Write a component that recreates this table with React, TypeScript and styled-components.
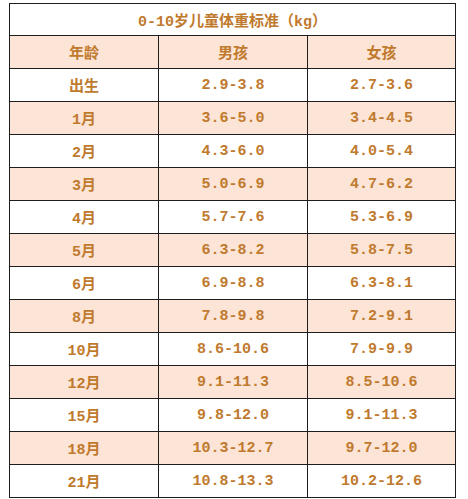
import React from "react";
import styled, { createGlobalStyle } from "styled-components";

const Global = createGlobalStyle`
  html, body { margin: 0; padding: 0; background: #ffffff; }
  body { font-family: "Liberation Mono", "Noto Sans CJK SC", monospace; }
`;

const Page = styled.div`
  padding: 3px 0 0 9px;
`;

const Table = styled.div`
  display: grid;
  grid-template-columns: 149px 149px 148px;
  width: 447px;
  border-left: 1px solid #1e1e1e;
  border-top: 1px solid #1e1e1e;
  box-sizing: border-box;
`;

const Cell = styled.div<{ $shade?: boolean; $span?: number; $h?: number }>`
  box-sizing: border-box;
  height: ${(p) => p.$h ?? 33}px;
  grid-column: span ${(p) => p.$span ?? 1};
  border-right: 1px solid #1e1e1e;
  border-bottom: 1px solid #1e1e1e;
  background: ${(p) => (p.$shade ? "#fce4d6" : "#ffffff")};
  display: flex;
  align-items: center;
  justify-content: center;
  color: #c07a2e;
  font-family: "Liberation Mono", "Noto Sans CJK SC", monospace;
  font-weight: 700;
  font-size: 15px;
  white-space: pre;
`;

const rows: [string, string, string][] = [
  ["出生", "2.9-3.8", "2.7-3.6"],
  ["1月", "3.6-5.0", "3.4-4.5"],
  ["2月", "4.3-6.0", "4.0-5.4"],
  ["3月", "5.0-6.9", "4.7-6.2"],
  ["4月", "5.7-7.6", "5.3-6.9"],
  ["5月", "6.3-8.2", "5.8-7.5"],
  ["6月", "6.9-8.8", "6.3-8.1"],
  ["8月", "7.8-9.8", "7.2-9.1"],
  ["10月", "8.6-10.6", "7.9-9.9"],
  ["12月", "9.1-11.3", "8.5-10.6"],
  ["15月", "9.8-12.0", "9.1-11.3"],
  ["18月", "10.3-12.7", "9.7-12.0"],
  ["21月", "10.8-13.3", "10.2-12.6"],
];

export default function App() {
  return (
    <>
      <Global />
      <Page>
        <Table>
          <Cell $span={3} $h={32}>0-10岁儿童体重标准（kg）</Cell>
          <Cell $shade>年龄</Cell>
          <Cell $shade>男孩</Cell>
          <Cell $shade>女孩</Cell>
          {rows.map((r, i) => (
            <React.Fragment key={r[0]}>
              <Cell $shade={i % 2 === 1}>{r[0]}</Cell>
              <Cell $shade={i % 2 === 1}>{r[1]}</Cell>
              <Cell $shade={i % 2 === 1}>{r[2]}</Cell>
            </React.Fragment>
          ))}
        </Table>
      </Page>
    </>
  );
}
